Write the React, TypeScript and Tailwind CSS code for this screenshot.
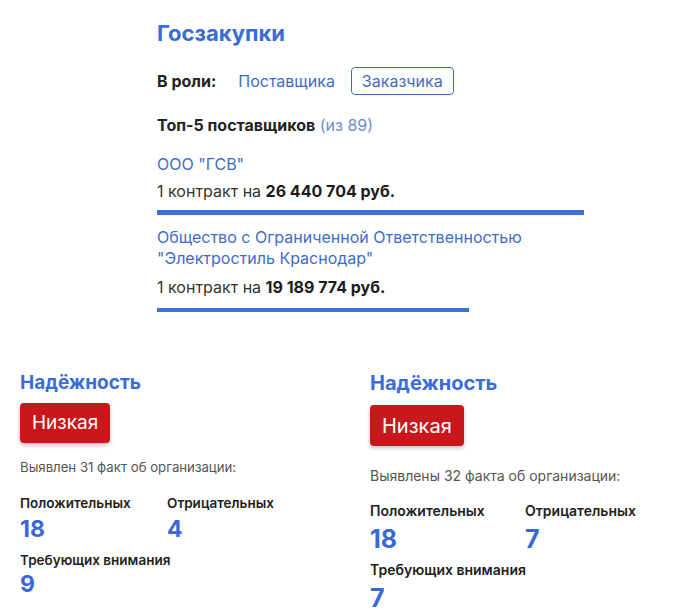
import React from 'react';

const font = { fontFamily: 'Inter, "Noto Sans", sans-serif' };

interface Supplier {
    name: string[];
    amount: string;
    bar: string;
}

const suppliers: Supplier[] = [
    { name: ['ООО "ГСВ"'], amount: '26 440 704 руб.', bar: 'w-[427px]' },
    {
        name: ['Общество с Ограниченной Ответственностью', '"Электростиль Краснодар"'],
        amount: '19 189 774 руб.',
        bar: 'w-[312px]',
    },
];

const Stat = ({ label, value, big, tight }: { label: string; value: number; big?: boolean; tight?: boolean }) => (
    <div className="flex flex-col">
        <span className={`font-semibold text-[#222] ${big ? 'text-[14px] leading-[19px]' : 'text-[13.5px] leading-[18px]'}`}>{label}</span>
        <span
            className={`font-bold text-[#3867d6] ${
                big ? 'text-[25px] leading-[30px] mt-1' : `text-[23px] leading-7 ${tight ? 'mt-px' : 'mt-[3px]'}`
            }`}
        >
            {value}
        </span>
    </div>
);

const Reliability = ({ facts, pos, neg, warn, big }: { facts: string; pos: number; neg: number; warn: number; big?: boolean }) => (
    <div className="flex flex-col items-start">
        <h3 className={`font-bold text-[#3a6cd6] ${big ? 'text-[20px] leading-[25px]' : 'text-[19px] leading-6'}`}>Надёжность</h3>
        <div
            className={`rounded-[4px] bg-[#c8181b] text-white shadow-[0_2px_4px_rgba(0,0,0,0.25)] flex items-center ${
                big ? 'mt-[9px] h-[41px] px-[12px] text-[20px]' : 'mt-2 h-10 px-3 text-[19px]'
            }`}
        >
            Низкая
        </div>
        <p className={`text-[#555] ${big ? 'mt-5 text-[14px] leading-[19px]' : 'mt-[15px] text-[13.2px] leading-[18px]'}`}>{facts}</p>
        <div className={`grid ${big ? 'grid-cols-[155px_auto] mt-4' : 'grid-cols-[147px_auto] mt-[18px]'}`}>
            <Stat label="Положительных" value={pos} big={big} />
            <Stat label="Отрицательных" value={neg} big={big} />
        </div>
        <div className={big ? 'mt-[6px]' : 'mt-2'}>
            <Stat label="Требующих внимания" value={warn} big={big} tight />
        </div>
    </div>
);

export default function App() {
    return (
        <div className="w-[680px] h-[610px] bg-white overflow-hidden" style={font}>
            {/* Госзакупки */}
            <div className="pl-[157px] pt-[19px]">
                <h2 className="text-[22px] leading-7 font-bold text-[#3a6cd6]">Госзакупки</h2>
                <div className="mt-5 flex items-center h-7 text-[16px]">
                    <span className="font-bold text-[#222]">В роли:</span>
                    <span className="ml-[22px] text-[#3f6cc6]">Поставщика</span>
                    <span className="ml-4 h-7 px-[10px] flex items-center border border-[#3f6cc6] rounded-[4px] text-[#3f6cc6]">Заказчика</span>
                </div>
                <div className="mt-5 text-[16px] leading-5">
                    <span className="font-bold text-[#222]">Топ-5 поставщиков</span>{' '}
                    <span className="text-[#6f8cc8]">(из 89)</span>
                </div>
                <div className="mt-[19px] flex flex-col">
                    {suppliers.map((s, i) => (
                        <div key={i} className={i > 0 ? 'mt-3' : ''}>
                            <div className="text-[16px] leading-[21px] text-[#3f6cc6]">
                                {s.name.map((n) => (
                                    <div key={n}>{n}</div>
                                ))}
                            </div>
                            <div className={`${i > 0 ? 'mt-2' : 'mt-[6px]'} text-[16px] leading-5 text-[#333]`}>
                                1 контракт на <b className="font-bold text-[#1c1c1e]">{s.amount}</b>
                            </div>
                            <div className={`${i > 0 ? 'mt-[11px] h-[4px]' : 'mt-[9px] h-[5px]'} ${s.bar} bg-[#3c70e0]`} />
                        </div>
                    ))}
                </div>
            </div>

            {/* Надёжность */}
            <div className="mt-[59px] flex pl-5">
                <div className="w-[350px]">
                    <Reliability facts="Выявлен 31 факт об организации:" pos={18} neg={4} warn={9} />
                </div>
                <div>
                    <Reliability facts="Выявлены 32 факта об организации:" pos={18} neg={7} warn={7} big />
                </div>
            </div>
        </div>
    );
}
